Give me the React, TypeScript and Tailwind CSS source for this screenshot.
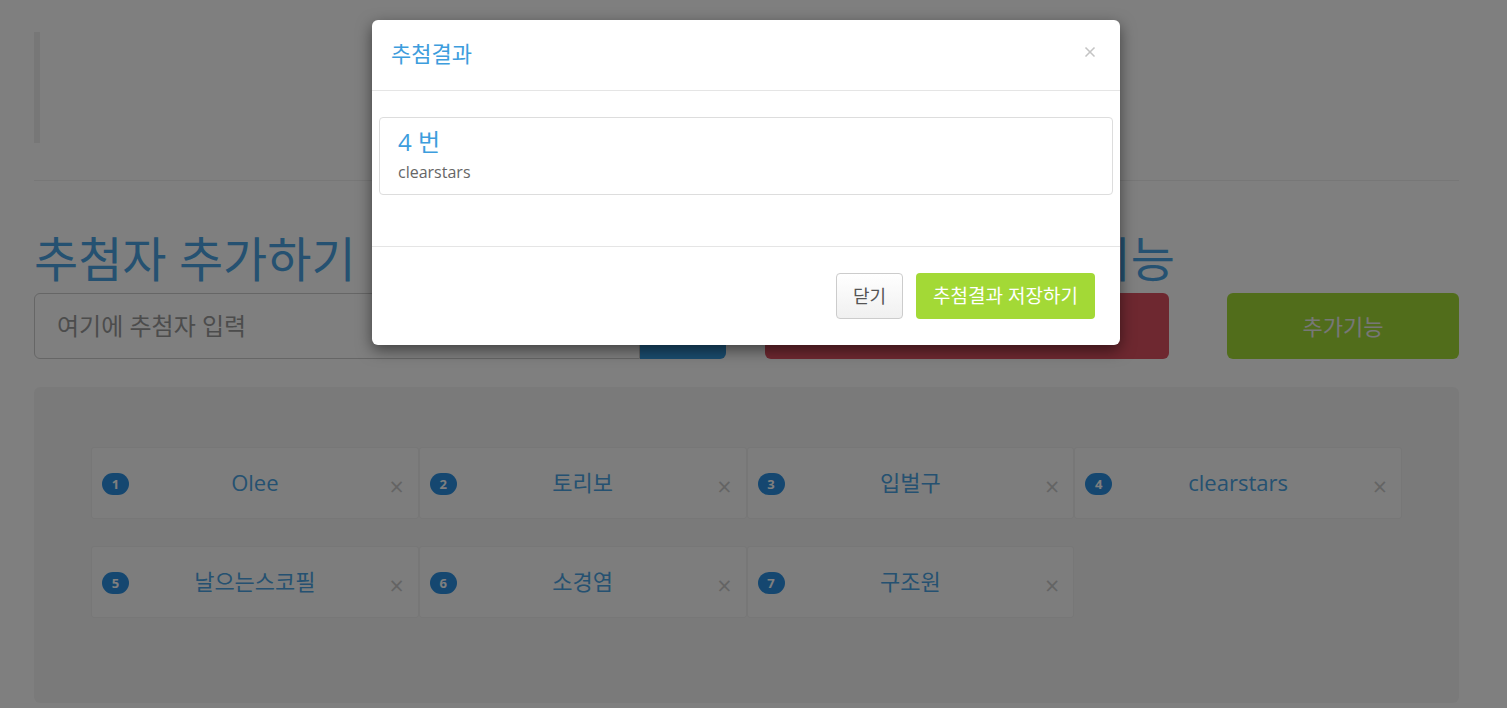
import { X } from "lucide-react";

const people = ["Olee", "토리보", "입벌구", "clearstars", "날으는스코필", "소경염", "구조원"];

function PersonCard({ no, name }: { no: number; name: string }) {
  return (
    <div className="relative h-[72px] bg-[#fbfbfb] border border-[#eeeeee] rounded-[3px]">
      <span className="absolute left-[10px] top-[25px] h-[22px] min-w-[27px] px-[8px] rounded-full bg-[#2a8fe0] text-white text-[13px] font-bold leading-[22px] text-center">
        {no}
      </span>
      <div className="h-full flex items-center justify-center pb-[2px] text-[22px] text-[#4aa3e2]">{name}</div>
      <span className="absolute right-[14px] top-[26px] text-[#c8c8c8] text-[25px] leading-none">×</span>
    </div>
  );
}

export default function App() {
  return (
    <div className="relative w-[1507px] h-[708px] overflow-hidden bg-white font-['Open_Sans','Noto_Sans_CJK_KR',sans-serif]">
      <div className="w-[1425px] ml-[34px] pt-[32px]">
        {/* empty blockquote */}
        <div className="h-[111px] border-l-[6px] border-[#eeeeee]" />
        <div className="mt-[37px] border-t border-[#eeeeee]" />

        <div className="mt-[44px] flex gap-[39px]">
          <div className="w-[692px]">
            <h1 className="text-[48px] leading-[68px] text-[#4aa3e2]">추첨자 추가하기</h1>
            <div className="flex h-[66px]">
              <div className="flex-1 border border-[#cccccc] rounded-l-[6px] flex items-center px-[22px] text-[24px] text-[#999999]">
                여기에 추첨자 입력
              </div>
              <div className="w-[86px] bg-[#3498dd] rounded-r-[6px]" />
            </div>
          </div>
          <div className="flex-1">
            <h1 className="text-[48px] leading-[68px] text-[#4aa3e2] whitespace-nowrap">추첨하기와 추가기능</h1>
            <div className="flex h-[66px] gap-[58px]">
              <div className="w-[404px] bg-[#dd5160] rounded-[6px]" />
              <div className="flex-1 bg-[#a2da36] rounded-[6px] flex items-center justify-center text-[22px] text-[#eeeeee]">
                추가기능
              </div>
            </div>
          </div>
        </div>

        <div className="mt-[28px] h-[316px] bg-[#f5f5f5] rounded-[6px] px-[57px] pt-[60px]">
          <div className="grid grid-cols-4 gap-y-[27px]">
            {people.map((p, i) => (
              <PersonCard key={p} no={i + 1} name={p} />
            ))}
          </div>
        </div>
      </div>

      {/* backdrop */}
      <div className="absolute inset-0 bg-black/50" />

      {/* modal */}
      <div className="absolute left-[372px] top-[20px] w-[748px] bg-white rounded-[6px] shadow-[0_5px_15px_rgba(0,0,0,0.5)]">
        <div className="h-[71px] border-b border-[#e5e5e5] flex items-center justify-between pl-[19px] pr-[22px]">
          <h4 className="text-[22px] text-[#3d9ddd] pb-[3px]">추첨결과</h4>
          <X className="w-[16px] h-[16px] text-[#c4c4c4] mb-[6px]" strokeWidth={2.5} />
        </div>
        <div className="h-[155px] px-[7px] pt-[26px]">
          <div className="h-[78px] border border-[#dddddd] rounded-[4px] px-[18px] pt-[8px]">
            <div className="text-[24px] leading-[32px] text-[#3d9ddd]">4 번</div>
            <div className="text-[16px] leading-[24px] text-[#666666] mt-[2px]">clearstars</div>
          </div>
        </div>
        <div className="h-[99px] border-t border-[#e5e5e5] flex justify-end items-start pt-[26px] pr-[25px] gap-[13px]">
          <button className="h-[46px] w-[67px] border border-[#cccccc] rounded-[4px] bg-gradient-to-b from-white to-[#f0f0f0] text-[18px] leading-none text-[#555555]">
            닫기
          </button>
          <button className="h-[46px] w-[179px] rounded-[4px] bg-[#a3d936] text-[19px] leading-none text-white">
            추첨결과 저장하기
          </button>
        </div>
      </div>
    </div>
  );
}
